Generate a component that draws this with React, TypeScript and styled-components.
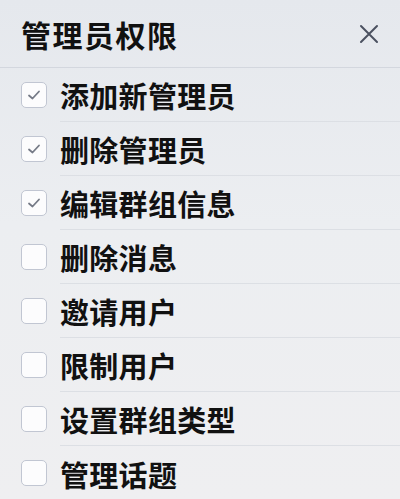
import React, { useState } from 'react'
import styled, { createGlobalStyle } from 'styled-components'

const GlobalStyle = createGlobalStyle`
  html, body {
    margin: 0;
    padding: 0;
    background: #eceef1;
  }
  body {
    font-family: "Noto Sans CJK SC", "Noto Sans", sans-serif;
    color: #111;
  }
`

const Panel = styled.div`
  width: 400px;
  height: 499px;
  overflow: hidden;
  background: linear-gradient(180deg, #e5e8ed 0%, #eceef1 45%, #efeff1 100%);
`

const Header = styled.div`
  height: 67px;
  display: flex;
  align-items: center;
  justify-content: space-between;
  padding: 0 20px 0 21px;
  border-bottom: 1px solid #d3d7de;
`

const Title = styled.h1`
  margin: 0;
  font-size: 30px;
  font-weight: 700;
  letter-spacing: 1.5px;
  line-height: 1;
  color: #111;
`

const CloseButton = styled.button`
  width: 22px;
  height: 22px;
  padding: 0;
  border: none;
  background: none;
  display: flex;
  align-items: center;
  justify-content: center;
  cursor: pointer;
`

const List = styled.ul`
  list-style: none;
  margin: 0;
  padding: 0;
`

const Row = styled.li`
  height: 54px;
  display: flex;
  align-items: center;
  gap: 13px;
  padding-left: 21px;
`

const Box = styled.span<{ $checked: boolean }>`
  width: 24px;
  height: 24px;
  flex: none;
  border: 1px solid #c1c6d2;
  border-radius: 5px;
  background: #fcfcfd;
  display: flex;
  align-items: center;
  justify-content: center;
  cursor: pointer;
`

const Label = styled.span<{ $last: boolean }>`
  flex: 1;
  align-self: stretch;
  display: flex;
  align-items: center;
  font-size: 29px;
  font-weight: 700;
  letter-spacing: 0.3px;
  border-bottom: ${(p) => (p.$last ? 'none' : '1px solid #dcdfe4')};
  padding-top: 1px;
`

const items = [
  { label: '添加新管理员', checked: true },
  { label: '删除管理员', checked: true },
  { label: '编辑群组信息', checked: true },
  { label: '删除消息', checked: false },
  { label: '邀请用户', checked: false },
  { label: '限制用户', checked: false },
  { label: '设置群组类型', checked: false },
  { label: '管理话题', checked: false },
]

export default function App() {
  const [state, setState] = useState(items.map((i) => i.checked))

  return (
    <>
      <GlobalStyle />
      <Panel>
        <Header>
          <Title>管理员权限</Title>
          <CloseButton aria-label="关闭">
            <svg width="20" height="20" viewBox="0 0 20 20">
              <path d="M2 2 L18 18 M18 2 L2 18" stroke="#4b5160" strokeWidth="2" strokeLinecap="round" />
            </svg>
          </CloseButton>
        </Header>
        <List>
          {items.map((item, i) => (
            <Row key={item.label}>
              <Box
                $checked={state[i]}
                onClick={() => setState((s) => s.map((v, j) => (j === i ? !v : v)))}
              >
                {state[i] && (
                  <svg width="14" height="12" viewBox="0 0 14 12">
                    <path d="M2 6.5 L5.5 9.5 L12 2.5" fill="none" stroke="#757a86" strokeWidth="1.8" strokeLinecap="round" strokeLinejoin="round" />
                  </svg>
                )}
              </Box>
              <Label $last={i === items.length - 1}>{item.label}</Label>
            </Row>
          ))}
        </List>
      </Panel>
    </>
  )
}
